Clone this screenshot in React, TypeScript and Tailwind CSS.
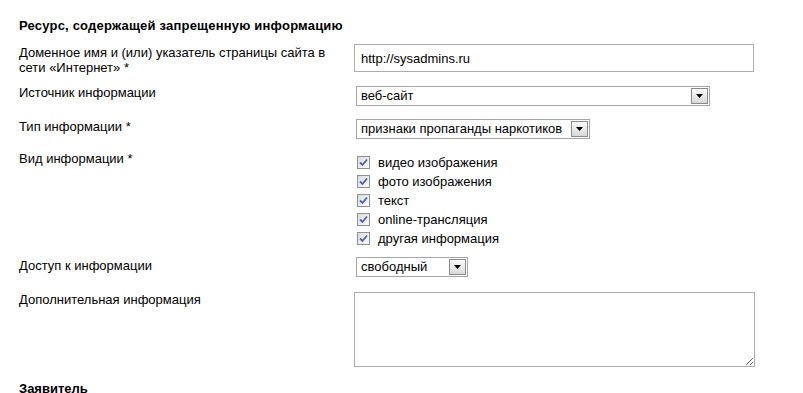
import React from "react";

function Arrow() {
  return (
    <div className="m-[1px] ml-0 flex w-[17px] shrink-0 items-center justify-center border border-[#8a8a8a] bg-gradient-to-b from-[#fbfbfb] to-[#d9d9d9]">
      <svg width="7" height="4" viewBox="0 0 7 4">
        <polygon points="0,0 7,0 3.5,4" fill="#000" />
      </svg>
    </div>
  );
}

function Select({ value, width }: { value: string; width: string }) {
  return (
    <div className={`ml-[2px] flex h-[20px] border border-[#a5a5a5] bg-white ${width}`}>
      <div className="flex-1 pl-[4px] text-[13px] leading-[18px] text-black">{value}</div>
      <Arrow />
    </div>
  );
}

function Check({ label }: { label: string }) {
  return (
    <div className="flex h-[19px] items-start">
      <span className="ml-[3px] mt-[1px] flex h-[13px] w-[13px] items-center justify-center border border-[#8f9294] bg-gradient-to-br from-[#dcdcdc] to-[#fafafa]">
        <svg width="9" height="9" viewBox="0 0 9 9">
          <path d="M1 4.5 L3.5 7 L8 1.5" fill="none" stroke="#4b64b0" strokeWidth="1.8" />
        </svg>
      </span>
      <span className="ml-[8px] text-[13px] leading-[15px] text-black">{label}</span>
    </div>
  );
}

export default function App() {
  return (
    <div
      className="h-[393px] w-[803px] overflow-hidden bg-white pl-[19px] text-[13px] leading-[15px] text-black"
      style={{ fontFamily: '"Liberation Sans", Arial, sans-serif' }}
    >
      <div className="pt-[18px] font-bold tracking-[0.2px]">Ресурс, содержащей запрещенную информацию</div>

      <div className="mt-[11px] flex items-start">
        <div className="mt-[1px] w-[335px] shrink-0 pr-[14px]">
          Доменное имя и (или) указатель страницы сайта в сети «Интернет» *
        </div>
        <div className="flex h-[28px] w-[400px] items-center border border-[#abadb3] pl-[6px]">
          http://sysadmins.ru
        </div>
      </div>

      <div className="mt-[10px] flex items-start">
        <div className="w-[335px] shrink-0">Источник информации</div>
        <div className="mt-[1px]">
          <Select value="веб-сайт" width="w-[354px]" />
        </div>
      </div>

      <div className="mt-[13px] flex items-start">
        <div className="w-[335px] shrink-0">Тип информации *</div>
        <Select value="признаки пропаганды наркотиков" width="w-[234px]" />
      </div>

      <div className="mt-[12px] flex items-start">
        <div className="w-[335px] shrink-0">Вид информации *</div>
        <div className="mt-[4px] flex flex-col">
          <Check label="видео изображения" />
          <Check label="фото изображения" />
          <Check label="текст" />
          <Check label="online-трансляция" />
          <Check label="другая информация" />
        </div>
      </div>

      <div className="mt-[7px] flex items-start">
        <div className="mt-[1px] w-[335px] shrink-0">Доступ к информации</div>
        <Select value="свободный" width="w-[112px]" />
      </div>

      <div className="mt-[15px] flex items-start">
        <div className="w-[335px] shrink-0">Дополнительная информация</div>
        <textarea className="block h-[75px] w-[401px] border border-[#abadb3] bg-white outline-none" />
      </div>

      <div className="mt-[14px] font-bold">Заявитель</div>
    </div>
  );
}
